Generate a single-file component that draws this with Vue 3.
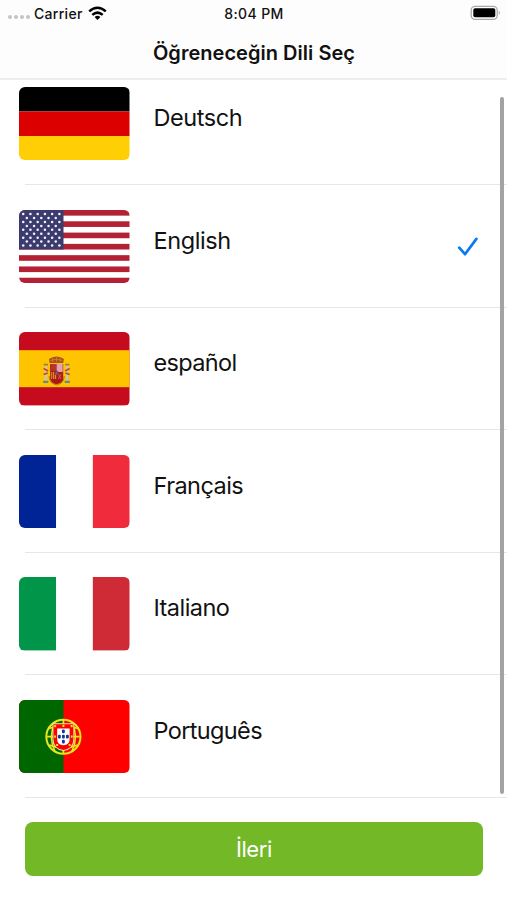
<script setup>
import { ref } from 'vue'

const languages = [
  { code: 'de', name: 'Deutsch' },
  { code: 'us', name: 'English' },
  { code: 'es', name: 'español' },
  { code: 'fr', name: 'Français' },
  { code: 'it', name: 'Italiano' },
  { code: 'pt', name: 'Português' },
]
const selected = ref('us')

const stars = []
for (let r = 0; r < 9; r++) {
  const count = r % 2 ? 5 : 6
  for (let c = 0; c < count; c++) {
    stars.push({ x: 4.2 + c * 7.2 + (r % 2 ? 3.6 : 0), y: 4.1 + r * 3.93 })
  }
}
</script>

<template>
  <div class="screen">
    <header class="top">
      <div class="status">
        <div class="carrier">
          <span class="dots"><i v-for="n in 4" :key="n"></i></span>
          <span class="carrier-name">Carrier</span>
          <svg class="wifi" width="19" height="15" viewBox="0 0 19 15">
            <g fill="none" stroke="#000" stroke-width="2.5">
              <path d="M1.2 5.4Q9.5 -1.9 17.8 5.4" />
              <path d="M4.3 8.9Q9.5 4.3 14.7 8.9" />
            </g>
            <path d="M6.6 11Q9.5 8.7 12.4 11L9.5 14.1Z" />
          </svg>
        </div>
        <span class="time">8:04 PM</span>
        <svg class="battery" width="31" height="16" viewBox="0 0 31 16">
          <rect x="1.2" y="1.3" width="26" height="13" rx="3.8" fill="#fff" stroke="#a9a9a9" stroke-width="1.3" />
          <rect x="3.3" y="3.3" width="22" height="9" rx="1.8" />
          <path d="M28.8 5.8Q30.8 7.8 28.8 9.8Z" fill="#999" />
        </svg>
      </div>
      <h1 class="title">Öğreneceğin Dili Seç</h1>
    </header>

    <main class="list">
      <ul class="rows">
        <li v-for="l in languages" :key="l.code" class="row" @click="selected = l.code">
          <svg class="flag" viewBox="0 0 110 73.4" preserveAspectRatio="none">
            <template v-if="l.code === 'de'">
              <rect width="110" height="24.5" fill="#000" />
              <rect y="24.5" width="110" height="24.5" fill="#d00" />
              <rect y="49" width="110" height="24.5" fill="#ffce05" />
            </template>
            <template v-else-if="l.code === 'us'">
              <rect width="110" height="73.4" fill="#fff" />
              <rect v-for="n in 7" :key="n" :y="(n - 1) * 11.292" width="110" height="5.646" fill="#b22234" />
              <rect width="44.3" height="39.5" fill="#3c3b6e" />
              <circle v-for="(s, i) in stars" :key="i" :cx="s.x" :cy="s.y" r="1.25" fill="#f3f3ff" />
            </template>
            <template v-else-if="l.code === 'es'">
              <rect width="110" height="73.4" fill="#c60b1e" />
              <rect y="18.2" width="110" height="37" fill="#ffc400" />
              <g>
                <path d="M31 32V48Q32 52 37 52Q43 52 44 48V32Z" fill="#ad1519" />
                <path d="M32 32H37.5V39H32Z" fill="#b9342c" />
                <path d="M37.5 32H43.5V40H37.5Z" fill="#dca5b0" />
                <path d="M32 40H37V47H32Z" fill="#d59a24" />
                <path d="M33.3 40V47M35.3 40V47" stroke="#ad1519" stroke-width=".8" />
                <path d="M38 41H43V48H38Z" fill="#b01a20" />
                <path d="M39 42L42 47M42 42L39 47" stroke="#c9912c" stroke-width=".6" />
                <ellipse cx="37.5" cy="41" rx="1.6" ry="2" fill="#576aa1" stroke="#ad1519" stroke-width=".7" />
                <path d="M30.5 31L29.8 27Q33 24.5 37.3 24.5Q41.8 24.5 44.7 27L44 31Z" fill="#a95020" />
                <path d="M31 28.5Q37 26 43.5 28.5M37.3 24V30M33.5 26V30M41 26V30" fill="none" stroke="#d0861c" stroke-width=".8" />
                <path d="M26.7 33V49M48 33V49" stroke="#c9c6b0" stroke-width="2.4" />
                <path d="M24.6 32.6H28.9M45.9 32.6H50.2" stroke="#a97c20" stroke-width="1.8" />
                <path d="M24.5 36.6L29 39M24.5 42.5L28.6 41M50.4 36.6L45.9 39M50.4 42.5L46.2 41" fill="none" stroke="#bb4a2a" stroke-width="1.7" />
                <path d="M24 49.8H29.2M45.5 49.8H50.7" stroke="#708b73" stroke-width="2.2" />
                <path d="M30 44Q30 51 37.5 53Q45 51 45 44" fill="none" stroke="#b57622" stroke-width="1" />
              </g>
            </template>
            <template v-else-if="l.code === 'fr'">
              <rect width="37" height="73.4" fill="#002395" />
              <rect x="37" width="36.5" height="73.4" fill="#fff" />
              <rect x="73.5" width="36.5" height="73.4" fill="#ef2b3c" />
            </template>
            <template v-else-if="l.code === 'it'">
              <rect width="37" height="73.4" fill="#009549" />
              <rect x="37" width="36.5" height="73.4" fill="#fff" />
              <rect x="73.5" width="36.5" height="73.4" fill="#ce2b37" />
            </template>
            <template v-else>
              <rect width="110" height="73.4" fill="#f00" />
              <rect width="44.3" height="73.4" fill="#060" />
              <g fill="none" stroke="#e8e71c">
                <circle cx="44.2" cy="36.7" r="17" stroke-width="2" />
                <path d="M28 36.7H60.4M29.5 28.5Q44 23.5 59 28.5M30 45Q44 51 58.5 45M44.2 20V53" stroke-width="1.8" />
                <path d="M36 21.5Q28.5 36.7 36 52M52.4 21.5Q60 36.7 52.4 52" stroke-width="1.5" />
              </g>
              <path d="M33.8 23.8H54.6V39Q54.6 49 44.2 50.5Q33.8 49 33.8 39Z" fill="#f00" stroke="#f4e8a0" stroke-width="1" />
              <path d="M38 28.5H50.4V39Q50.4 44.8 44.2 45.3Q38 44.8 38 39Z" fill="#fff" />
              <g fill="#123a94">
                <rect x="42.8" y="29.6" width="2.8" height="3.7" rx="1" />
                <rect x="42.8" y="34.7" width="2.8" height="3.7" rx="1" />
                <rect x="42.8" y="39.8" width="2.8" height="3.7" rx="1" />
                <rect x="38.8" y="34.7" width="2.8" height="3.7" rx="1" />
                <rect x="46.8" y="34.7" width="2.8" height="3.7" rx="1" />
              </g>
              <g fill="#ece52c">
                <rect x="35" y="25" width="2" height="2.2" /><rect x="43.2" y="24.8" width="2" height="2.2" />
                <rect x="51.4" y="25" width="2" height="2.2" /><rect x="35" y="35.5" width="1.8" height="2.2" />
                <rect x="51.6" y="35.5" width="1.8" height="2.2" /><rect x="37" y="44" width="2" height="2" />
                <rect x="49.4" y="44" width="2" height="2" />
              </g>
            </template>
          </svg>
          <div class="cell">
            <span class="name" :class="l.code">{{ l.name }}</span>
            <svg v-if="selected === l.code" class="check" width="22" height="22" viewBox="0 0 22 22">
              <path d="M2.2 11.7L8 18.2L19.4 2.9" fill="none" stroke="#087aef" stroke-width="2.7" stroke-linecap="round" stroke-linejoin="round" />
            </svg>
          </div>
        </li>
      </ul>
      <div class="thumb"></div>
    </main>

    <footer class="footer">
      <button class="next" type="button"><span>İleri</span></button>
    </footer>
  </div>
</template>

<style>
body {
  background: #fff;
}
</style>

<style scoped>
.screen {
  display: flex;
  flex-direction: column;
  width: 507px;
  height: 900px;
  overflow: hidden;
  background: #fff;
  color: #111;
  font-family: Inter, "Liberation Sans", sans-serif;
}
.top {
  box-sizing: border-box;
  height: 80px;
  flex: none;
  background: #fdfdfd;
  border-bottom: 2px solid #ededed;
}
.status {
  display: grid;
  grid-template-columns: 1fr auto 1fr;
  align-items: center;
  height: 26px;
  padding: 0 6px 0 8px;
  font-size: 14px;
  font-weight: 500;
  letter-spacing: 0.3px;
}
.carrier {
  display: flex;
  align-items: center;
}
.dots {
  display: flex;
  gap: 2px;
  padding-top: 8px;
  margin-right: 4px;
}
.dots i {
  width: 4px;
  height: 4px;
  border-radius: 50%;
  background: #c4c4c4;
}
.time {
  margin-right: 1px;
  letter-spacing: 0.4px;
}
.carrier-name {
  width: 49px;
  white-space: nowrap;
}
.wifi {
  margin-left: 5px;
}
.battery {
  justify-self: end;
}
.title {
  margin: 0;
  padding: 14px 0 0 1px;
  font-size: 20px;
  line-height: 26px;
  font-weight: 600;
  letter-spacing: 0.03px;
  text-align: center;
}
.list {
  position: relative;
  flex: none;
  height: 718px;
  overflow: hidden;
}
.rows {
  list-style: none;
  margin: -17.7px 0 0;
  padding: 0;
}
.row {
  display: flex;
  box-sizing: border-box;
  height: 122.6px;
  padding: 24.7px 0 0 19px;
  background: linear-gradient(#e6e6e6, #e6e6e6) 25px 100% / 100% 1px no-repeat;
}
.flag {
  width: 110.5px;
  height: 73.4px;
  flex: none;
  border-radius: 6px;
}
.cell {
  display: flex;
  flex: 1;
  justify-content: space-between;
  padding: 16px 28px 0 24px;
}
.name {
  font-size: 23.5px;
  line-height: 30px;
  letter-spacing: -0.42px;
}
.name.es,
.name.pt {
  letter-spacing: -0.64px;
}
.name.fr,
.name.it {
  letter-spacing: -0.55px;
}
.check {
  margin-top: 10px;
}
.thumb {
  position: absolute;
  top: 17px;
  right: 3px;
  width: 4px;
  height: 697px;
  border-radius: 2px;
  background: #a3a3a3;
}
.footer {
  padding: 24px 24.5px 0 25.3px;
}
.next {
  display: block;
  width: 100%;
  height: 53.5px;
  border: 0;
  padding: 0;
  border-radius: 8px;
  background: #73b827;
  color: #fff;
  font: 400 22px/55px Inter, "Liberation Sans", sans-serif;
  letter-spacing: -0.4px;
}
</style>
